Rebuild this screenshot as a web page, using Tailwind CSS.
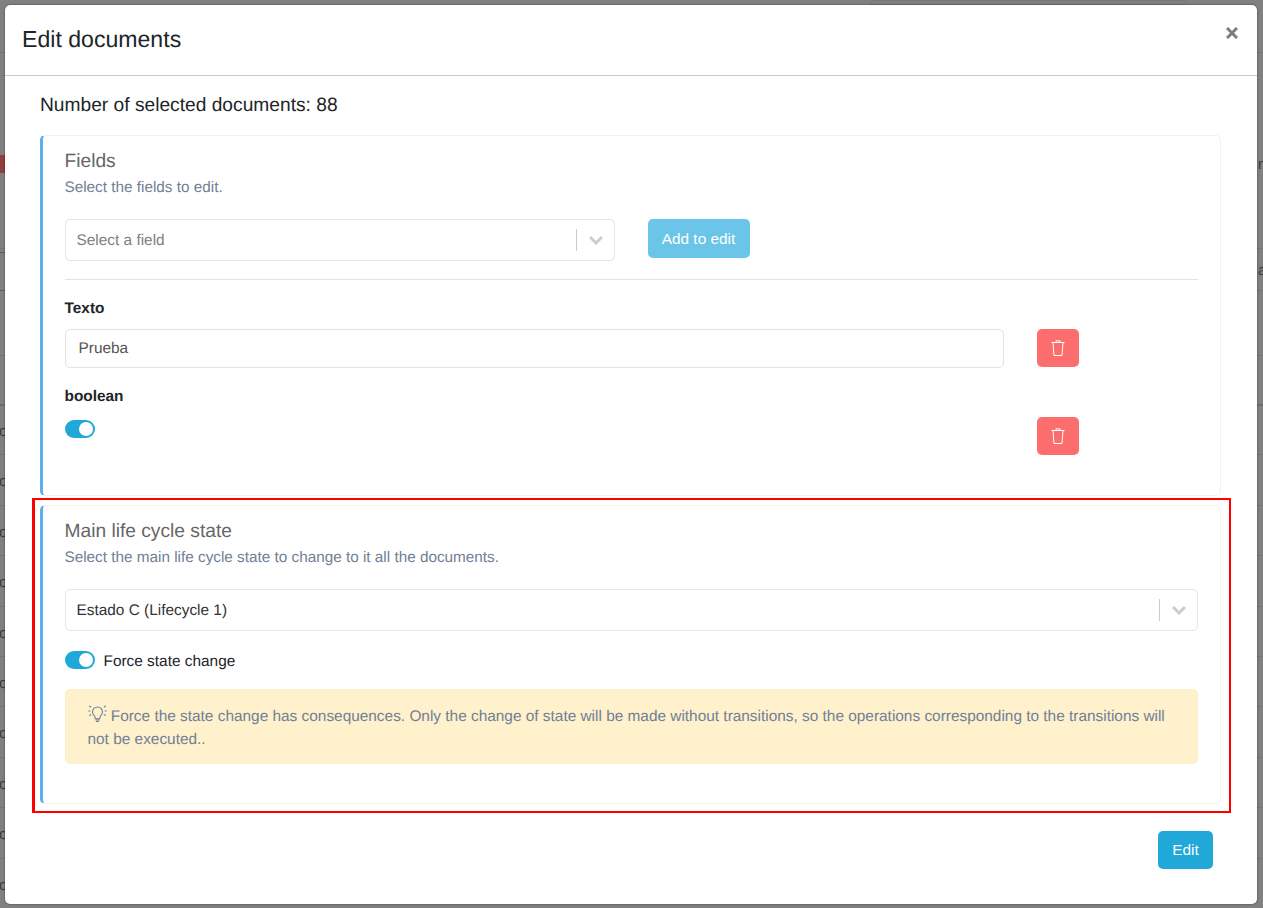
<!DOCTYPE html>
<html lang="en">
<head>
  <meta charset="UTF-8">
  <title>Edit documents</title>
  <script src="https://cdn.jsdelivr.net/npm/@tailwindcss/browser@4"></script>
</head>
<body class="relative h-[908px] w-[1263px] overflow-hidden bg-[#808080] font-['Liberation_Sans',Arial,sans-serif] text-[#212529] [text-rendering:geometricPrecision]">

  <!-- page behind the backdrop -->
  <div class="absolute inset-0 text-[15px] text-[#3a3a3a]">
    <div class="absolute left-[870px] top-0 h-[5px] w-[318px] rounded-t border border-[#747474]"></div>
    <div class="absolute left-0 top-[52px] h-px w-full bg-[#747474]"></div>
    <div class="absolute left-0 top-[155px] h-[18px] w-[5px] bg-[#8f3f3c]"></div>
    <div class="absolute left-0 top-[221px] h-px w-full bg-[#7a8a72]"></div>
    <div class="absolute left-0 top-[248px] h-px w-full bg-[#747474]"></div>
    <div class="absolute left-0 top-[252px] h-[39px] w-[5px] border-y border-[#2d6f80]"></div>
    <div class="absolute left-[1257px] top-[290px] h-px w-[6px] bg-[#747474]"></div>
    <div class="absolute left-0 top-[355px] h-px w-full bg-[#747474]"></div>
    <span class="absolute left-[1258px] top-[154px]">n</span>
    <span class="absolute left-[1258px] top-[260px]">a</span>
    <div class="absolute left-0 top-[404px] flex w-full flex-col border-t-2 border-[#6c6c6c]">
      <div class="flex h-[49.4px] items-center border-b border-[#747474] pt-[5px]"><span class="-ml-[1px]">o</span></div>
      <div class="flex h-[50.4px] items-center border-b border-[#747474] pt-[5px]"><span class="-ml-[1px]">o</span></div>
      <div class="flex h-[50.4px] items-center border-b border-[#747474] pt-[5px]"><span class="-ml-[1px]">o</span></div>
      <div class="flex h-[50.4px] items-center border-b border-[#747474] pt-[5px]"><span class="-ml-[1px]">o</span></div>
      <div class="flex h-[50.4px] items-center border-b border-[#747474] pt-[5px]"><span class="-ml-[1px]">o</span></div>
      <div class="flex h-[50.4px] items-center border-b border-[#747474] pt-[5px]"><span class="-ml-[1px]">o</span></div>
      <div class="flex h-[50.4px] items-center border-b border-[#747474] pt-[5px]"><span class="-ml-[1px]">o</span></div>
      <div class="flex h-[50.4px] items-center border-b border-[#747474] pt-[5px]"><span class="-ml-[1px]">o</span></div>
      <div class="flex h-[50.4px] items-center border-b border-[#747474] pt-[5px]"><span class="-ml-[1px]">o</span></div>
      <div class="flex h-[50.4px] items-center pt-[5px]"><span class="-ml-[1px]">o</span></div>
    </div>
  </div>

  <!-- modal -->
  <div class="absolute left-[5px] top-[5px] flex h-[899px] w-[1252px] flex-col rounded-[5px] bg-white shadow-[0_0_2px_rgba(0,0,0,0.6)]">
    <div class="relative h-[71px] shrink-0 border-b border-[#c8c8d0] pl-[17px] pt-[18px]">
      <h5 class="text-[23.1px] leading-[32px]">Edit documents</h5>
      <svg class="absolute left-[1221px] top-[22px] h-[12px] w-[12px]" viewBox="0 0 12 12"><path d="M1 1 11 11M11 1 1 11" stroke="#7d7d7d" stroke-width="3"/></svg>
    </div>

    <div class="flex flex-1 flex-col px-[35px]">
      <p class="mt-[17px] text-[19.2px] leading-[26px]">Number of selected documents: 88</p>

      <!-- fields card -->
      <section class="mt-[16px] h-[361px] w-[1181px] rounded-[5px] border border-l-[3px] border-[#f2f2f2] border-l-[#5faeea] pl-[21.5px] pr-[22px] pt-[14px]">
        <h4 class="text-[19.2px] leading-[24px] text-[#666666]">Fields</h4>
        <p class="mt-[3px] text-[15.3px] leading-[22px] text-[#718096]">Select the fields to edit.</p>
        <div class="mt-[20px] flex items-start">
          <div class="flex h-[42px] w-[550px] items-center rounded-[5px] border border-[#e6e6e6] pl-[11px] pr-[11px]">
            <span class="flex-1 pt-[2px] text-[15.4px] text-[#808080]">Select a field</span>
            <span class="h-[22px] w-px bg-[#cccccc]"></span>
            <svg class="ml-[12px] h-[10px] w-[14px]" viewBox="0 0 14 10"><path d="M1 2 7 8l6-6" fill="none" stroke="#cccccc" stroke-width="3"/></svg>
          </div>
          <button class="ml-[33px] h-[39px] w-[102px] rounded-[5px] bg-[#6bc5e8] pt-[1px] text-[15.4px] text-white">Add to edit</button>
        </div>
        <div class="mt-[18px] h-px w-[1133px] bg-[#e2e2e2]"></div>

        <label class="mt-[20px] block text-[15.4px] font-bold leading-[18px]">Texto</label>
        <div class="mt-[11px] flex items-start">
          <div class="flex h-[39px] w-[939px] items-center rounded-[5px] border border-[#e2e2e2] pl-[13px] pt-[1px] text-[15.4px] text-[#555555]">Prueba</div>
          <button class="ml-[33px] flex h-[38px] w-[42px] items-center justify-center rounded-[5px] bg-[#fc6d6d]">
            <svg class="h-[16px] w-[14px]" viewBox="0 0 14 16" fill="none" stroke="#fff" stroke-width="1"><path d="M.5 2.500h13M2 2.500l1 13h8l1-13M5 2.500V.8h4v1.700"/></svg>
          </button>
        </div>

        <label class="mt-[20px] block text-[15.4px] font-bold leading-[18px]">boolean</label>
        <div class="flex items-start">
          <div class="mt-[14px] flex h-[18px] w-[30px] items-center justify-end rounded-full bg-[#20a8d8] pr-[2px]"><span class="h-[14px] w-[14px] rounded-full bg-white"></span></div>
          <button class="ml-[942px] mt-[11px] flex h-[38px] w-[42px] items-center justify-center rounded-[5px] bg-[#fc6d6d]">
            <svg class="h-[16px] w-[14px]" viewBox="0 0 14 16" fill="none" stroke="#fff" stroke-width="1"><path d="M.5 2.500h13M2 2.500l1 13h8l1-13M5 2.500V.8h4v1.700"/></svg>
          </button>
        </div>
      </section>

      <!-- life cycle card -->
      <section class="mt-[9px] h-[299px] w-[1181px] rounded-[5px] border border-l-[3px] border-[#f2f2f2] border-l-[#5faeea] pl-[21.5px] pr-[22px] pt-[14px]">
        <h4 class="text-[19.2px] leading-[24px] text-[#666666]">Main life cycle state</h4>
        <p class="mt-[3px] text-[15.3px] leading-[22px] text-[#718096]">Select the main life cycle state to change to it all the documents.</p>
        <div class="mt-[20px] flex h-[42px] w-[1133px] items-center rounded-[5px] border border-[#e6e6e6] pl-[11px] pr-[11px]">
          <span class="flex-1 pt-[2px] text-[15.4px] text-[#333333]">Estado C (Lifecycle 1)</span>
          <span class="h-[22px] w-px bg-[#cccccc]"></span>
          <svg class="ml-[12px] h-[10px] w-[14px]" viewBox="0 0 14 10"><path d="M1 2 7 8l6-6" fill="none" stroke="#cccccc" stroke-width="3"/></svg>
        </div>
        <div class="mt-[20px] flex h-[18px] items-center">
          <div class="flex h-[18px] w-[30px] items-center justify-end rounded-full bg-[#20a8d8] pr-[2px]"><span class="h-[14px] w-[14px] rounded-full bg-white"></span></div>
          <span class="ml-[9px] pt-[3px] text-[15.4px]">Force state change</span>
        </div>
        <div class="mt-[20px] h-[75px] w-[1133px] rounded-[5px] border border-[#fbeecb] bg-[#fef1cc] px-[22px] pt-[15px] text-[15.4px] leading-[23px] text-[#718096]">
          <svg class="inline-block h-[17px] w-[19px] align-[-1px]" viewBox="0 0 19 17" fill="none" stroke="#6f7f95" stroke-width="1.100"><path d="M6.800 11.500C5.300 10 4.500 8.800 4.500 7 4.500 4 6.700 2 9.500 2s5 2 5 5c0 1.800-.8 3-2.300 4.500l-.5 2.300H7.300zM7.500 15h4M8 16.500h3M1.200 1l2 1.200M17.800 1l-2 1.200M.3 6h2M16.700 6h2M1.200 10.500l2-1M17.800 10.500l-2-1"/></svg> Force the state change has consequences. Only the change of state will be made without transitions, so the operations corresponding to the transitions will not be executed..
        </div>
      </section>

      <div class="mt-[27px] flex w-[1173px] justify-end">
        <button class="h-[38px] w-[55px] rounded-[5px] bg-[#20a8d8] text-[15.4px] text-white">Edit</button>
      </div>
    </div>
  </div>

  <!-- red annotation box -->
  <div class="pointer-events-none absolute left-[32px] top-[498px] h-[315px] w-[1199px] border-2 border-l-[3px] border-[#ff0000]"></div>
</body>
</html>
